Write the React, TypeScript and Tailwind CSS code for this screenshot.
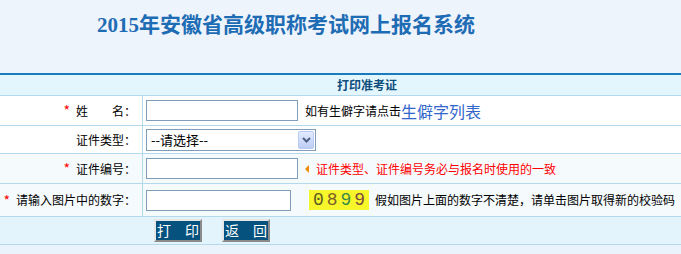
import React from 'react';

const cjk = { fontFamily: '"Noto Sans CJK SC", "Liberation Sans", sans-serif' };

const Star = () => <span className="text-[#ff0000] text-[14px] mr-[6px]">*</span>;

const Row = ({
  label,
  bg,
  h,
  children,
}: {
  label: React.ReactNode;
  bg: string;
  h: string;
  children: React.ReactNode;
}) => (
  <div className={`flex border-b border-[#b5d9ec] ${bg} ${h}`}>
    <div className="w-[143px] shrink-0 border-r border-[#b5d9ec] flex items-center justify-end pr-[6px] text-[12px] text-black">
      {label}
    </div>
    <div className="flex items-center pl-[3px] text-[12px]">{children}</div>
  </div>
);

const Input = ({ w }: { w: string }) => (
  <input
    type="text"
    className={`${w} h-[21px] border border-[#7f9db9] bg-white outline-none`}
  />
);

const App = () => {
  return (
    <div className="w-[681px] h-[254px] overflow-hidden bg-[#eaf3fb]" style={cjk}>
      <div className="h-[73px] bg-[#eef4fc] pl-[97px] pt-[10px]">
        <h1
          className="text-[21px] font-bold leading-[30px] text-[#1e6cb4] whitespace-nowrap"
          style={{ fontFamily: '"Liberation Serif", "Noto Sans CJK SC", serif' }}
        >
          2015年安徽省高级职称考试网上报名系统
        </h1>
      </div>
      <div className="h-[2px] bg-[#1a7bbd]" />
      <div className="h-[21px] bg-[#e3f5fd] border-b border-[#b5d9ec] pl-[337px] text-[12px] font-bold leading-[20px] text-[#0c4d7c]">
        打印准考证
      </div>

      <Row bg="bg-white" h="h-[30px]" label={<><Star />姓　　名：</>}>
        <Input w="w-[152px]" />
        <span className="ml-[7px] text-black">如有生僻字请点击</span>
        <span className="text-[16px] text-[#3366cc]">生僻字列表</span>
      </Row>

      <Row bg="bg-white" h="h-[28px]" label="证件类型：">
        <div className="w-[170px] h-[22px] border border-[#7f9db9] bg-white flex items-center justify-between">
          <span className="pl-[4px] text-[13px] text-black">--请选择--</span>
          <span className="w-[16px] h-[18px] mr-[1px] rounded-[2px] border border-[#b9c9ef] bg-gradient-to-b from-[#e3ebfd] to-[#bccdf6] flex items-center justify-center">
            <svg width="9" height="6" viewBox="0 0 9 6">
              <path d="M1 1 L4.5 4.5 L8 1" stroke="#4d6185" strokeWidth="2" fill="none" />
            </svg>
          </span>
        </div>
      </Row>

      <Row bg="bg-[#f5fafd]" h="h-[30px]" label={<><Star />证件编号：</>}>
        <Input w="w-[152px]" />
        <svg className="ml-[7px]" width="4" height="8" viewBox="0 0 4 8">
          <path d="M4 0 L0 4 L4 8 Z" fill="#f08a00" />
        </svg>
        <span className="ml-[7px] text-[#ff0000]">证件类型、证件编号务必与报名时使用的一致</span>
      </Row>

      <Row bg="bg-[#f5fafd]" h="h-[33px]" label={<><Star />请输入图片中的数字：</>}>
        <Input w="w-[145px]" />
        <span
          className="ml-[18px] w-[60px] h-[20px] bg-[#f6f62b] flex items-center justify-center text-[18px] tracking-[3px] pl-[3px]"
          style={{ fontFamily: '"Liberation Mono", monospace' }}
        >
          <span className="text-[#5b5b22]">0</span>
          <span className="text-[#7d5c2c]">8</span>
          <span className="text-[#3c8a46]">9</span>
          <span className="text-[#7b4a3a]">9</span>
        </span>
        <span className="ml-[6px] text-black whitespace-nowrap">假如图片上面的数字不清楚，请单击图片取得新的校验码</span>
      </Row>

      <div className="h-[28px] bg-[#e3f4fc] border-b border-[#b5d9ec] flex items-center pl-[154px] gap-[20px]">
        {['打　印', '返　回'].map((t) => (
          <button
            key={t}
            className="w-[48px] h-[23px] bg-[#05527f] text-white text-[14px] leading-[19px] border-2 border-t-[#e6e6e6] border-l-[#e6e6e6] border-b-[#8a8a8a] border-r-[#8a8a8a]"
          >
            {t}
          </button>
        ))}
      </div>
    </div>
  );
};

export default App;
